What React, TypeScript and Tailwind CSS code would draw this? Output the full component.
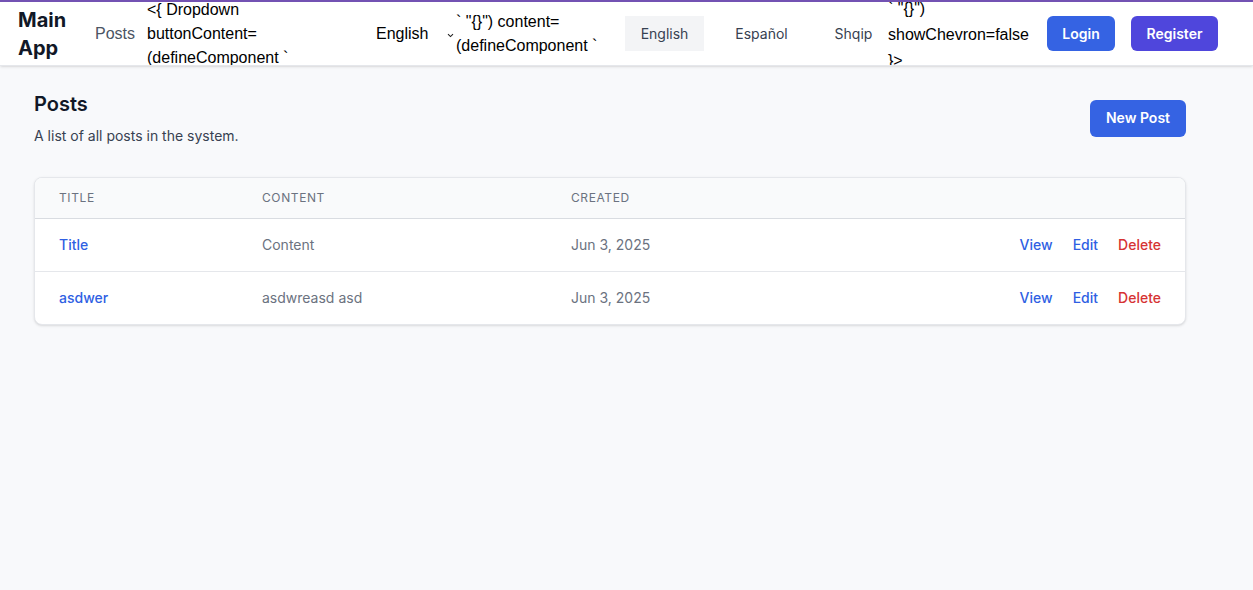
import React from 'react'

const posts = [
    { title: 'Title', content: 'Content', created: 'Jun 3, 2025' },
    { title: 'asdwer', content: 'asdwreasd asd', created: 'Jun 3, 2025' },
]

const Nav = () => {
    return (
        <nav className="h-[66px] bg-white border-t-2 border-[#7352b3] border-b border-b-[#e5e7eb] shadow-sm flex items-center pl-[18px] overflow-hidden">
            <div className="w-[77px] shrink-0 font-['Inter'] font-bold text-xl leading-7 text-[#111827]">
                <div className="w-[50px]">Main App</div>
            </div>
            <div className="w-[52px] shrink-0 font-['Liberation_Sans'] text-base text-[#4b5563]">Posts</div>
            <div className="w-[229px] shrink-0 font-['Liberation_Sans'] text-base leading-6 text-black">
                <div className="w-[160px]">{'<{ Dropdown buttonContent= (defineComponent `'}</div>
            </div>
            <div className="w-[80px] shrink-0 flex items-center font-['Liberation_Sans'] text-base text-black">
                <span>English</span>
                <svg className="ml-[19px] mt-[4px]" width="7" height="5" viewBox="0 0 7 5" fill="none">
                    <path d="M1 1.2L3.5 3.6L6 1.2" stroke="#222" strokeWidth="1.1" />
                </svg>
            </div>
            <div className="w-[169px] shrink-0 font-['Liberation_Sans'] text-base leading-6 text-black">
                <div className="w-[152px]">{'` "{}") content= (defineComponent `'}</div>
            </div>
            <div className="flex gap-4 shrink-0 font-['Inter'] text-sm text-[#374151]">
                <span className="w-[79px] h-[35px] flex items-center justify-center bg-[#f3f4f6]">English</span>
                <span className="w-[83px] h-[35px] flex items-center justify-center">Español</span>
                <span className="w-[69px] h-[35px] flex items-center justify-center">Shqip</span>
            </div>
            <div className="w-[159px] shrink-0 font-['Liberation_Sans'] text-base leading-[26px] text-black pt-[2px]">
                <div className="w-[146px]">{'` "{}") showChevron=false }>'}</div>
            </div>
            <div className="flex gap-4 shrink-0 font-['Inter'] text-sm font-semibold text-white">
                <button className="w-[68px] h-[35px] rounded-md bg-[#3563e3]">Login</button>
                <button className="w-[87px] h-[35px] rounded-md bg-[#4f46dc]">Register</button>
            </div>
        </nav>
    )
}

export default function App() {
    return (
        <div className="min-h-[590px] bg-[#f8f9fb] font-['Inter']">
            <Nav />
            <main className="pl-[34px] pt-6">
                <div className="w-[1152px]">
                    <div className="flex items-center justify-between">
                        <div>
                            <h1 className="text-xl leading-7 font-semibold text-[#111827]">Posts</h1>
                            <p className="mt-2 text-sm text-[#374151]">A list of all posts in the system.</p>
                        </div>
                        <button className="w-[96px] h-[37px] rounded-md bg-[#3563e3] text-white text-sm font-semibold">
                            New Post
                        </button>
                    </div>

                    <div className="mt-[31px] bg-white rounded-lg border border-[#e5e7eb] shadow-sm overflow-hidden">
                        <div className="grid grid-cols-[203px_309px_1fr_auto] bg-[#f9fafb] border-b border-[#d9dce1] text-xs leading-4 font-normal uppercase tracking-wider text-[#6b7280]">
                            <div className="pl-6 py-3">Title</div>
                            <div className="pl-6 py-3">Content</div>
                            <div className="pl-6 py-3">Created</div>
                            <div className="pr-6 py-3"></div>
                        </div>
                        {posts.map((p, i) => (
                            <div
                                key={i}
                                className={`grid grid-cols-[203px_309px_1fr_auto] text-sm ${i > 0 ? 'border-t border-[#e5e7eb]' : ''}`}
                            >
                                <div className="pl-6 py-4 font-medium text-[#2f5fe3]">{p.title}</div>
                                <div className="pl-6 py-4 text-[#6b7280]">{p.content}</div>
                                <div className="pl-6 py-4 text-[#6b7280]">{p.created}</div>
                                <div className="pr-6 py-4 flex gap-5 font-medium">
                                    <span className="text-[#2f5fe3]">View</span>
                                    <span className="text-[#2f5fe3]">Edit</span>
                                    <span className="text-[#d63333]">Delete</span>
                                </div>
                            </div>
                        ))}
                    </div>
                </div>
            </main>
        </div>
    )
}
